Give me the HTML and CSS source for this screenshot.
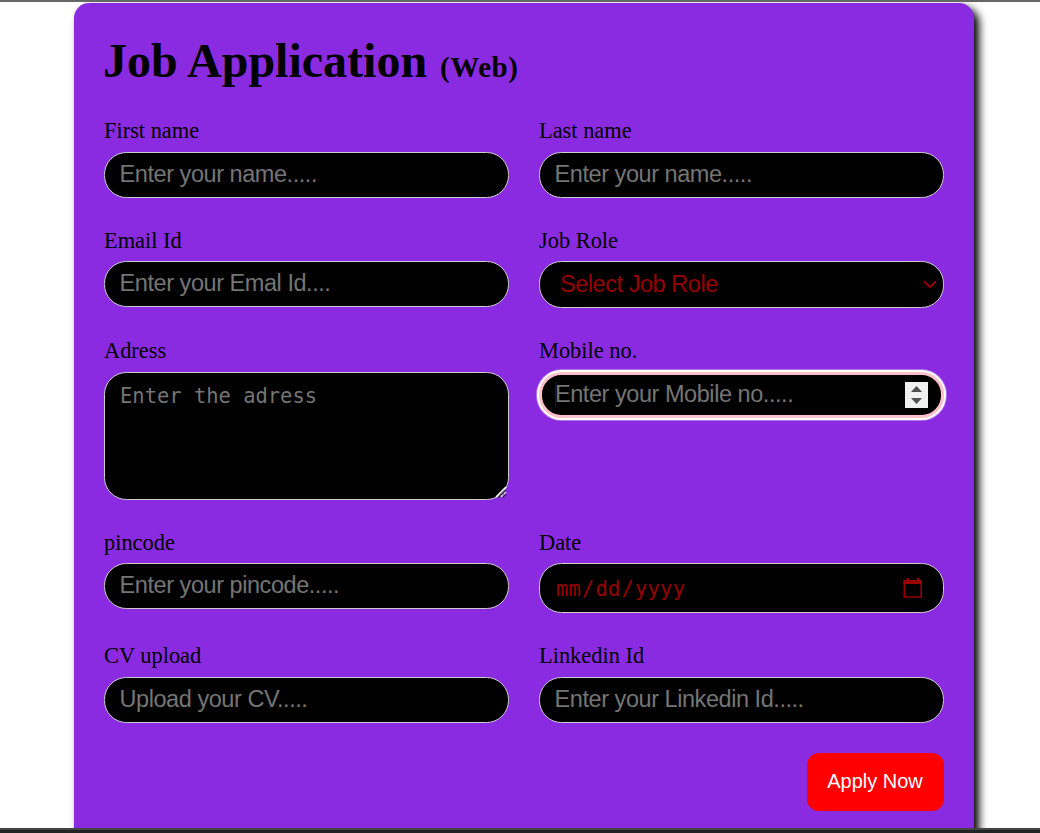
FILE: index.html
```
<!DOCTYPE html>
<html lang="en">
<head>
<meta charset="utf-8">
<title>Job Application</title>
<link rel="stylesheet" href="styles.css">
</head>
<body>
<main class="page">
  <form class="card">
    <h1 class="title">Job Application <span class="title-note">(Web)</span></h1>
    <div class="fields">
      <div class="field"><label class="label">First name</label><div class="control">Enter your name.....</div></div>
      <div class="field"><label class="label">Last name</label><div class="control">Enter your name.....</div></div>
      <div class="field tight"><label class="label">Email Id</label><div class="control">Enter your Emal Id....</div></div>
      <div class="field tight"><label class="label">Job Role</label>
        <div class="control select"><span>Select Job Role</span>
          <svg class="chevron" viewBox="0 0 14 9"><path d="M1 1.2 7 7.2 13 1.2" fill="none" stroke="currentColor" stroke-width="2"/></svg>
        </div>
      </div>
      <div class="field"><label class="label">Adress</label>
        <div class="control textarea"><span>Enter the adress</span>
          <svg class="grip" viewBox="0 0 12 12"><path d="M1 11 11 1" stroke="#fff" stroke-width="1.6"/><path d="M3.5 11.5 11 4M7.5 11.5 11 8" stroke="#35204a" stroke-width="1.6"/><path d="M6 11 11 6" stroke="#ddd" stroke-width="1.5" stroke-dasharray="3 1"/></svg>
        </div>
      </div>
      <div class="field"><label class="label">Mobile no.</label>
        <div class="control focused"><span class="caret">Enter your Mobile no.....</span>
          <svg class="spinner" viewBox="0 0 23 26"><path d="M0 0H23V26H0Z" fill="#f0f0f0"/><path d="M6 10 11.5 4 17 10ZM6 16H17L11.5 22Z" fill="#505050"/></svg>
        </div>
      </div>
      <div class="field tight"><label class="label">pincode</label><div class="control">Enter your pincode.....</div></div>
      <div class="field tight"><label class="label">Date</label>
        <div class="control date"><span class="date-text"><span class="part">mm</span>/<span class="part">dd</span>/<span class="part">yyyy</span></span>
          <svg class="calendar" viewBox="0 0 20 21"><path d="M1.3 3H18.2V19H1.3Z" fill="none" stroke="currentColor" stroke-width="1.6"/><path d="M.5 2.2H19V6H.5ZM3.5 0H6V3H3.5ZM14 0H16.3V3H14Z" fill="currentColor"/></svg>
        </div>
      </div>
      <div class="field"><label class="label">CV upload</label><div class="control">Upload your CV.....</div></div>
      <div class="field"><label class="label">Linkedin Id</label><div class="control">Enter your Linkedin Id.....</div></div>
    </div>
    <div class="actions"><button class="apply" type="button">Apply Now</button></div>
  </form>
</main>
</body>
</html>
```
FILE: styles.css
```
* { box-sizing: border-box; }
body { margin: 0; background: #222423; font-family: "Liberation Serif", serif; }
.page {
  height: 830px;
  overflow: hidden;
  padding: 1px 66px 0 74px;
  background: #fff;
  border-top: 2px solid #666;
  border-bottom: 2px solid #444;
}
.card {
  height: 860px;
  padding: 30px;
  background: blueviolet;
  border-radius: 15px;
  box-shadow: 5px 5px 8px #000;
}
.title { margin: 0 0 0 -1px; height: 85px; font-size: 48px; line-height: 56px; }
.title-note { font-size: 29px; letter-spacing: .5px; margin-left: 1px; }
.fields {
  display: grid;
  grid-template-columns: 405px 405px;
  grid-template-rows: 110px 110px 192px 113px 105px;
  column-gap: 30px;
}
.field { display: flex; flex-direction: column; align-items: stretch; }
.label { height: 34px; font-size: 22.4px; line-height: 26px; flex: none; color: #000; }
.tight .label { height: 33px; }
.control {
  display: flex;
  justify-content: space-between;
  height: 46px;
  padding: 0 15px 0 14.6px;
  border: 1px solid #ccc;
  border-radius: 22.4px;
  background: #000;
  color: #757575;
  font: 23.5px/43px "Liberation Sans", Arial, sans-serif;
  letter-spacing: -.45px;
  white-space: pre;
}
.select { height: 47px; padding: 0 6px 0 20px; line-height: 45px; align-items: center; color: #990000; }
.chevron { width: 14px; height: 9px; }
.textarea {
  height: 128px;
  padding: 0 1px 0 15px;
  font: 20.47px/46px "DejaVu Sans Mono", monospace;
  letter-spacing: 0;
}
.grip { width: 12px; height: 12px; align-self: flex-end; margin-bottom: 1px; }
.focused {
  padding: 0 13px;
  border: 3px solid pink;
  box-shadow: 0 0 0 2px #fff, 0 0 0 3px rgba(255, 255, 255, .35);
  align-items: center;
}
.caret { box-shadow: inset 1px 0 #5a0000; line-height: 25px; margin-bottom: 2px; }
.spinner { width: 23px; height: 26px; }
.date { height: 50px; padding: 0 20px 0 15px; color: #990000; align-items: center; }
.date-text { font: 20.47px/50px "DejaVu Sans Mono", monospace; letter-spacing: .2px; padding-top: 2px; }
.part { padding: 0 1px; }
.calendar { width: 20px; height: 21px; }
.actions { display: flex; justify-content: flex-end; }
.apply {
  width: 137px;
  height: 58px;
  margin-top: 5px;
  padding: 0 1px 2px 0;
  border: 0;
  border-radius: 12px;
  background: red;
  color: #fff;
  font: 20px "Liberation Sans", Arial, sans-serif;
}
```
